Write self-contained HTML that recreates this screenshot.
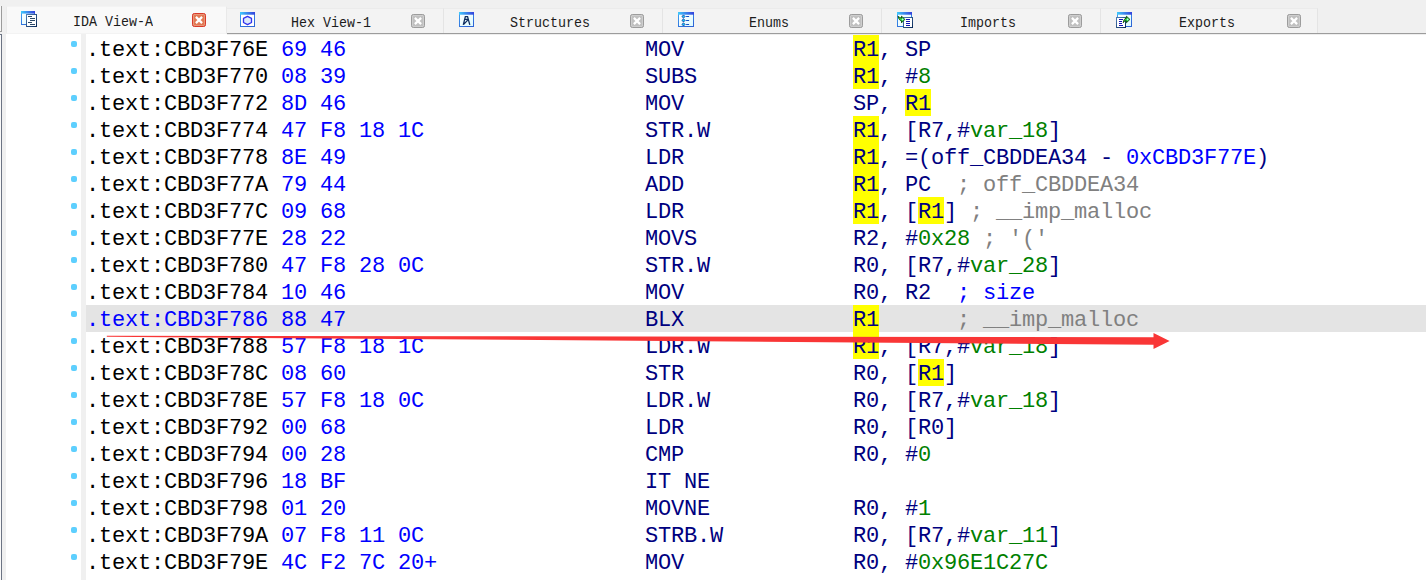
<!DOCTYPE html>
<html lang="en"><head><meta charset="utf-8"><title>IDA View-A</title>
<style>
html,body{margin:0;padding:0;}
body{width:1426px;height:580px;overflow:hidden;background:#f0f0f0;position:relative;}
.ic{position:absolute;display:block;}
.tab{position:absolute;box-sizing:border-box;}
.tab.on{top:6px;height:28px;background:#f9f9f9;border-top:1px solid #f3f3f3;border-right:1px solid #e9e9e9;border-left:1px solid #ececec;border-bottom:1px solid #f3f3f3;}
.tab.off{top:8px;height:25px;background:#f3f3f3;border-top:1px solid #ebebeb;border-right:1px solid #e4e4e4;}
.lbl{position:absolute;font-family:"Liberation Mono","DejaVu Sans Mono",monospace;font-size:13.33px;line-height:16px;height:16px;color:#1c1c1c;white-space:pre;letter-spacing:0px;transform-origin:0 100%;transform:scale(1,1.1);}
#bl1{position:absolute;left:226px;top:33px;width:1200px;height:1px;background:#9c9c9c;}
#bl2{position:absolute;left:227px;top:34px;width:1199px;height:1px;background:#eeeeee;}
#lb1{position:absolute;left:0;top:6px;width:1px;height:25px;border-right:1px solid #9c9c9c;border-bottom:1px solid #9c9c9c;background:#f8f8f8;}
#lb2{position:absolute;left:0;top:34px;width:1px;height:560px;border-right:1px solid #6c7484;border-top:1px solid #6c7484;background:#fafafa;}
#view{position:absolute;left:6px;top:34px;width:1420px;height:546px;background:#fff;}
#gut{position:absolute;left:81px;top:34px;width:5px;height:546px;background:#f0f0f0;}
.dot{position:absolute;left:71px;width:6px;height:6px;border-radius:2px;background:#5dcffe;}
.row{position:absolute;left:86px;width:1340px;height:27px;}
.row.hl{background:#e4e4e4;}
.row .c{position:absolute;top:0;height:27px;line-height:31.291px;font-family:"Liberation Mono","DejaVu Sans Mono",monospace;font-size:22px;letter-spacing:-0.2021px;white-space:pre;-webkit-text-stroke:0px currentColor;}
.a{color:#000}.hl .a{color:#0000ff}
.by{color:#0000ff}
.m,.n{color:#000080}
.g{color:#008000}.b{color:#0000ff}.cm{color:#808080}
.y{color:#000080}
.yb{position:absolute;top:0;width:26px;height:27px;background:#ffff00;}
#arrow{position:absolute;left:0;top:0;}
</style></head><body>
<svg width="0" height="0" style="position:absolute"><defs><linearGradient id="gt" x1="0" y1="0" x2="1" y2="0"><stop offset="0" stop-color="#40ccfc"/><stop offset="0.5" stop-color="#3a84ec"/><stop offset="1" stop-color="#3440dc"/></linearGradient><linearGradient id="gw" x1="0" y1="0" x2="0.6" y2="1"><stop offset="0" stop-color="#3ea4f4"/><stop offset="1" stop-color="#2e66d6"/></linearGradient><linearGradient id="gb" x1="0" y1="0" x2="1" y2="1"><stop offset="0" stop-color="#ffffff"/><stop offset="1" stop-color="#dcfaff"/></linearGradient><linearGradient id="gd" x1="0" y1="0" x2="1" y2="1"><stop offset="0" stop-color="#4c7cb4"/><stop offset="1" stop-color="#0a2a58"/></linearGradient></defs></svg>
<div id="lb1"></div><div id="lb2"></div>
<div id="bl1"></div>
<div class="tab on" style="left:6px;width:221px"></div>
<svg class="ic" style="left:21px;top:11px" width="17" height="17" viewBox="0 0 17 17">
<rect x="0.5" y="0.5" width="13" height="13" fill="url(#gb)" stroke="url(#gw)"/>
<rect x="0" y="0" width="14" height="2.6" fill="url(#gt)"/>
<rect x="5.5" y="3.5" width="10" height="12" fill="#ffffff" stroke="url(#gd)"/>
<path d="M7 5.5h4M9 7.5h5M9 9.5h5M7 11.5h4M9 13.5h5" stroke="#2c4866" stroke-width="1"/>
</svg>
<div class="lbl" style="left:73px;top:15.2px">IDA View-A</div>
<svg class="ic" style="left:192px;top:13px" width="14" height="14" viewBox="0 0 14 14"><rect x="0.5" y="0.5" width="13" height="13" rx="1.8" fill="#e27a54" stroke="#d93a2a"/><rect x="1.5" y="1.5" width="11" height="11" rx="1" fill="none" stroke="#fff" stroke-opacity="0.22"/><path d="M3.9 3.9L10.1 10.1M10.1 3.9L3.9 10.1" stroke="#fff" stroke-width="2.2"/></svg>
<div class="tab off" style="left:227px;width:217px"></div>
<svg class="ic" style="left:240px;top:12px" width="15" height="15" viewBox="0 0 15 15">
<rect x="0.5" y="0.5" width="14" height="14" fill="#ffffff" stroke="url(#gw)"/>
<rect x="0" y="0" width="15" height="2.7" fill="url(#gt)"/>
<path d="M7.5 4.3 L11.5 6.4 L11.5 10.5 L7.5 12.6 L3.5 10.5 L3.5 6.4 Z" fill="#dde9fb" stroke="#3232ee" stroke-width="1.3" stroke-linejoin="round"/>
</svg>
<div class="lbl" style="left:291px;top:16.2px">Hex View-1</div>
<svg class="ic" style="left:411px;top:14px" width="14" height="14" viewBox="0 0 14 14"><rect x="0.5" y="0.5" width="13" height="13" rx="1.8" fill="#c0c0c0" stroke="#9c9c9c"/><rect x="1.5" y="1.5" width="11" height="11" rx="1" fill="none" stroke="#fff" stroke-opacity="0.22"/><path d="M3.9 3.9L10.1 10.1M10.1 3.9L3.9 10.1" stroke="#fff" stroke-width="2.2"/></svg>
<div class="tab off" style="left:444px;width:219px"></div>
<svg class="ic" style="left:459px;top:12px" width="15" height="15" viewBox="0 0 15 15">
<rect x="0.5" y="0.5" width="14" height="14" fill="url(#gb)" stroke="url(#gw)"/>
<rect x="0" y="0" width="15" height="2.7" fill="url(#gt)"/>
<path d="M5.9 4.7h3.1 M6.4 4.3 L4.3 12.9 M8.5 4.3 L10.8 12.9 M5.8 7.3h3.4 M4.7 12.4 L8.7 8.1" stroke="#0e2c5e" stroke-width="1.3" fill="none"/>
</svg>
<div class="lbl" style="left:510px;top:16.2px">Structures</div>
<svg class="ic" style="left:630px;top:14px" width="14" height="14" viewBox="0 0 14 14"><rect x="0.5" y="0.5" width="13" height="13" rx="1.8" fill="#c0c0c0" stroke="#9c9c9c"/><rect x="1.5" y="1.5" width="11" height="11" rx="1" fill="none" stroke="#fff" stroke-opacity="0.22"/><path d="M3.9 3.9L10.1 10.1M10.1 3.9L3.9 10.1" stroke="#fff" stroke-width="2.2"/></svg>
<div class="tab off" style="left:663px;width:219px"></div>
<svg class="ic" style="left:678px;top:12px" width="16" height="15" viewBox="0 0 16 15">
<rect x="0.5" y="0.5" width="15" height="14" fill="url(#gb)" stroke="url(#gw)"/>
<rect x="0" y="0" width="16" height="2.7" fill="url(#gt)"/>
<path d="M8.1 4.5h3M8.1 8.5h3M8.1 12.5h3" stroke="#1450c8" stroke-width="1.1"/>
<path d="M5.5 2.9l1.6 1.6-1.6 1.6-1.6-1.6zM5.5 6.8l1.6 1.6-1.6 1.6-1.6-1.6zM5.5 10.8l1.6 1.6-1.6 1.6-1.6-1.6z" fill="#10d0f8" stroke="#102898" stroke-width="0.8"/>
</svg>
<div class="lbl" style="left:749px;top:16.2px">Enums</div>
<svg class="ic" style="left:849px;top:14px" width="14" height="14" viewBox="0 0 14 14"><rect x="0.5" y="0.5" width="13" height="13" rx="1.8" fill="#c0c0c0" stroke="#9c9c9c"/><rect x="1.5" y="1.5" width="11" height="11" rx="1" fill="none" stroke="#fff" stroke-opacity="0.22"/><path d="M3.9 3.9L10.1 10.1M10.1 3.9L3.9 10.1" stroke="#fff" stroke-width="2.2"/></svg>
<div class="tab off" style="left:882px;width:219px"></div>
<svg class="ic" style="left:897px;top:12px" width="17" height="17" viewBox="0 0 17 17">
<rect x="0.5" y="0.5" width="14" height="14" fill="url(#gb)" stroke="url(#gw)"/>
<rect x="0" y="0" width="15" height="2.7" fill="url(#gt)"/>
<rect x="6.5" y="5.5" width="9" height="10" fill="#ffffff" stroke="url(#gd)"/>
<path d="M9 7.5h4M9 9.5h4M9 11.5h4M9 13.5h4" stroke="#1212b4" stroke-width="1.1"/>
<path d="M1 4.4 C2.4 5.2 3.3 5.9 4.5 6.1 L4.5 4.2 L7.9 7.4 L4.5 10.8 L4.5 8.9 C3 8.6 1.7 7.2 1 4.4 Z" fill="#2cdc34" stroke="#0b420b" stroke-width="0.9" stroke-linejoin="round"/>
<circle cx="5.6" cy="7.4" r="0.9" fill="#b8f4f4"/>
</svg>
<div class="lbl" style="left:960px;top:16.2px">Imports</div>
<svg class="ic" style="left:1068px;top:14px" width="14" height="14" viewBox="0 0 14 14"><rect x="0.5" y="0.5" width="13" height="13" rx="1.8" fill="#c0c0c0" stroke="#9c9c9c"/><rect x="1.5" y="1.5" width="11" height="11" rx="1" fill="none" stroke="#fff" stroke-opacity="0.22"/><path d="M3.9 3.9L10.1 10.1M10.1 3.9L3.9 10.1" stroke="#fff" stroke-width="2.2"/></svg>
<div class="tab off" style="left:1101px;width:217px"></div>
<svg class="ic" style="left:1116px;top:12px" width="17" height="17" viewBox="0 0 17 17">
<rect x="1.5" y="0.5" width="14" height="14" fill="url(#gb)" stroke="url(#gw)"/>
<rect x="1" y="0" width="15" height="2.7" fill="url(#gt)"/>
<rect x="0.5" y="5.5" width="9" height="10" fill="#ffffff" stroke="url(#gd)"/>
<path d="M3 7.5h4M3 9.5h3M3 11.5h3M3 13.5h4" stroke="#1212b4" stroke-width="1.1"/>
<path d="M7.3 10.7 C7.5 8 8.6 6.4 10.4 6.2 L10.4 4.2 L13.9 7.4 L10.4 10.8 L10.4 8.8 C9 8.8 8.1 9.4 7.3 10.7 Z" fill="#2cdc34" stroke="#0b420b" stroke-width="0.9" stroke-linejoin="round"/>
<circle cx="11.6" cy="7.4" r="0.9" fill="#b8f4f4"/>
</svg>
<div class="lbl" style="left:1179px;top:16.2px">Exports</div>
<svg class="ic" style="left:1287px;top:14px" width="14" height="14" viewBox="0 0 14 14"><rect x="0.5" y="0.5" width="13" height="13" rx="1.8" fill="#c0c0c0" stroke="#9c9c9c"/><rect x="1.5" y="1.5" width="11" height="11" rx="1" fill="none" stroke="#fff" stroke-opacity="0.22"/><path d="M3.9 3.9L10.1 10.1M10.1 3.9L3.9 10.1" stroke="#fff" stroke-width="2.2"/></svg>
<div id="view"></div><div id="bl2"></div><div id="gut"></div>
<div class="dot" style="top:41px"></div><div class="row" style="top:35px"><span class="c a" style="left:0">.text:CBD3F76E</span><span class="c by" style="left:195px">69 46</span><span class="c m" style="left:559px">MOV</span><i class="yb" style="left:767px"></i><span class="c n" style="left:767px"><span class="y">R1</span>, SP</span></div>
<div class="dot" style="top:68px"></div><div class="row" style="top:62px"><span class="c a" style="left:0">.text:CBD3F770</span><span class="c by" style="left:195px">08 39</span><span class="c m" style="left:559px">SUBS</span><i class="yb" style="left:767px"></i><span class="c n" style="left:767px"><span class="y">R1</span>, #<span class="g">8</span></span></div>
<div class="dot" style="top:95px"></div><div class="row" style="top:89px"><span class="c a" style="left:0">.text:CBD3F772</span><span class="c by" style="left:195px">8D 46</span><span class="c m" style="left:559px">MOV</span><i class="yb" style="left:819px"></i><span class="c n" style="left:767px">SP, <span class="y">R1</span></span></div>
<div class="dot" style="top:122px"></div><div class="row" style="top:116px"><span class="c a" style="left:0">.text:CBD3F774</span><span class="c by" style="left:195px">47 F8 18 1C</span><span class="c m" style="left:559px">STR.W</span><i class="yb" style="left:767px"></i><span class="c n" style="left:767px"><span class="y">R1</span>, [R7,#<span class="g">var_18</span>]</span></div>
<div class="dot" style="top:149px"></div><div class="row" style="top:143px"><span class="c a" style="left:0">.text:CBD3F778</span><span class="c by" style="left:195px">8E 49</span><span class="c m" style="left:559px">LDR</span><i class="yb" style="left:767px"></i><span class="c n" style="left:767px"><span class="y">R1</span>, =(off_CBDDEA34 - <span class="b">0xCBD3F77E</span>)</span></div>
<div class="dot" style="top:176px"></div><div class="row" style="top:170px"><span class="c a" style="left:0">.text:CBD3F77A</span><span class="c by" style="left:195px">79 44</span><span class="c m" style="left:559px">ADD</span><i class="yb" style="left:767px"></i><span class="c n" style="left:767px"><span class="y">R1</span>, PC  <span class="cm">; off_CBDDEA34</span></span></div>
<div class="dot" style="top:203px"></div><div class="row" style="top:197px"><span class="c a" style="left:0">.text:CBD3F77C</span><span class="c by" style="left:195px">09 68</span><span class="c m" style="left:559px">LDR</span><i class="yb" style="left:767px"></i><i class="yb" style="left:832px"></i><span class="c n" style="left:767px"><span class="y">R1</span>, [<span class="y">R1</span>] <span class="cm">; __imp_malloc</span></span></div>
<div class="dot" style="top:230px"></div><div class="row" style="top:224px"><span class="c a" style="left:0">.text:CBD3F77E</span><span class="c by" style="left:195px">28 22</span><span class="c m" style="left:559px">MOVS</span><span class="c n" style="left:767px">R2, #<span class="g">0x28</span> <span class="cm">; '('</span></span></div>
<div class="dot" style="top:257px"></div><div class="row" style="top:251px"><span class="c a" style="left:0">.text:CBD3F780</span><span class="c by" style="left:195px">47 F8 28 0C</span><span class="c m" style="left:559px">STR.W</span><span class="c n" style="left:767px">R0, [R7,#<span class="g">var_28</span>]</span></div>
<div class="dot" style="top:284px"></div><div class="row" style="top:278px"><span class="c a" style="left:0">.text:CBD3F784</span><span class="c by" style="left:195px">10 46</span><span class="c m" style="left:559px">MOV</span><span class="c n" style="left:767px">R0, R2  <span class="b">; size</span></span></div>
<div class="dot" style="top:311px"></div><div class="row hl" style="top:305px"><span class="c a" style="left:0">.text:CBD3F786</span><span class="c by" style="left:195px">88 47</span><span class="c m" style="left:559px">BLX</span><i class="yb" style="left:767px"></i><span class="c n" style="left:767px"><span class="y">R1</span>      <span class="cm">; __imp_malloc</span></span></div>
<div class="dot" style="top:338px"></div><div class="row" style="top:332px"><span class="c a" style="left:0">.text:CBD3F788</span><span class="c by" style="left:195px">57 F8 18 1C</span><span class="c m" style="left:559px">LDR.W</span><i class="yb" style="left:767px"></i><span class="c n" style="left:767px"><span class="y">R1</span>, [R7,#<span class="g">var_18</span>]</span></div>
<div class="dot" style="top:365px"></div><div class="row" style="top:359px"><span class="c a" style="left:0">.text:CBD3F78C</span><span class="c by" style="left:195px">08 60</span><span class="c m" style="left:559px">STR</span><i class="yb" style="left:832px"></i><span class="c n" style="left:767px">R0, [<span class="y">R1</span>]</span></div>
<div class="dot" style="top:392px"></div><div class="row" style="top:386px"><span class="c a" style="left:0">.text:CBD3F78E</span><span class="c by" style="left:195px">57 F8 18 0C</span><span class="c m" style="left:559px">LDR.W</span><span class="c n" style="left:767px">R0, [R7,#<span class="g">var_18</span>]</span></div>
<div class="dot" style="top:419px"></div><div class="row" style="top:413px"><span class="c a" style="left:0">.text:CBD3F792</span><span class="c by" style="left:195px">00 68</span><span class="c m" style="left:559px">LDR</span><span class="c n" style="left:767px">R0, [R0]</span></div>
<div class="dot" style="top:446px"></div><div class="row" style="top:440px"><span class="c a" style="left:0">.text:CBD3F794</span><span class="c by" style="left:195px">00 28</span><span class="c m" style="left:559px">CMP</span><span class="c n" style="left:767px">R0, #<span class="g">0</span></span></div>
<div class="dot" style="top:473px"></div><div class="row" style="top:467px"><span class="c a" style="left:0">.text:CBD3F796</span><span class="c by" style="left:195px">18 BF</span><span class="c m" style="left:559px">IT NE</span></div>
<div class="dot" style="top:500px"></div><div class="row" style="top:494px"><span class="c a" style="left:0">.text:CBD3F798</span><span class="c by" style="left:195px">01 20</span><span class="c m" style="left:559px">MOVNE</span><span class="c n" style="left:767px">R0, #<span class="g">1</span></span></div>
<div class="dot" style="top:527px"></div><div class="row" style="top:521px"><span class="c a" style="left:0">.text:CBD3F79A</span><span class="c by" style="left:195px">07 F8 11 0C</span><span class="c m" style="left:559px">STRB.W</span><span class="c n" style="left:767px">R0, [R7,#<span class="g">var_11</span>]</span></div>
<div class="dot" style="top:554px"></div><div class="row" style="top:548px"><span class="c a" style="left:0">.text:CBD3F79E</span><span class="c by" style="left:195px">4C F2 7C 20+</span><span class="c m" style="left:559px">MOV</span><span class="c n" style="left:767px">R0, #<span class="g">0x96E1C27C</span></span></div>
<svg id="arrow" width="1426" height="580" viewBox="0 0 1426 580"><path d="M106.8 335.8 L1153.5 337.2 L1153.5 333 L1169.6 340.9 L1153.5 348.9 L1153.5 344.7 L106.8 336.8 Z" fill="#f93636"/></svg>
</body></html>
